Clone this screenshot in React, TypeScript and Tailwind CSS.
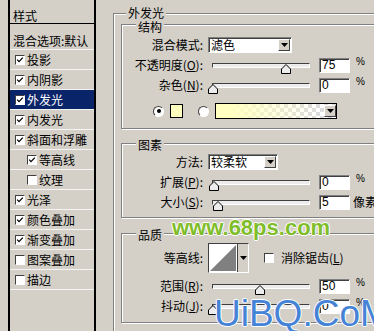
import type { ReactNode } from 'react'

const cjk = '[font-family:"Noto_Sans_CJK_SC","Liberation_Sans",sans-serif]'

function Tick() {
  return (
    <svg viewBox="0 0 10 10" className="h-[8px] w-[8px]">
      <path d="M1.5 4.5 L3.8 7 L8.5 2" fill="none" stroke="#000" strokeWidth="1.6" />
    </svg>
  )
}

function CheckBox({ checked }: { checked: boolean }) {
  return (
    <span className="flex h-[10px] w-[10px] shrink-0 items-center justify-center border border-t-[#404040] border-l-[#404040] border-r-white border-b-white bg-white">
      {checked && <Tick />}
    </span>
  )
}

function DropArrow() {
  return (
    <span className="flex h-[12px] w-[12px] shrink-0 items-center justify-center border border-t-white border-l-white border-r-[#404040] border-b-[#404040] bg-[#d4d0c8]">
      <svg viewBox="0 0 7 4" className="h-[4px] w-[7px]">
        <path d="M0 0 H7 L3.5 4 Z" fill="#000" />
      </svg>
    </span>
  )
}

function Select({ value, width }: { value: string; width: string }) {
  return (
    <div className={`ml-[5px] flex h-[16px] items-center justify-between border border-t-[#808080] border-l-[#808080] border-r-white border-b-white bg-white pl-[2px] pr-[1px] shadow-[inset_1px_1px_0_#404040] ${width}`}>
      <span className="leading-[14px]">{value}</span>
      <DropArrow />
    </div>
  )
}

function Slider({ value }: { value: number }) {
  return (
    <div className="relative ml-[9px] h-[5px] w-[98px] shrink-0 border border-t-[#404040] border-l-[#404040] border-r-white border-b-white bg-[#ececec]">
      <svg
        viewBox="0 0 10 10"
        className="absolute top-[0px] h-[10px] w-[10px]"
        style={{ left: `calc(${value}% - 5px)` }}
      >
        <path d="M5 0.5 L9.5 5 L9.5 9.5 L0.5 9.5 L0.5 5 Z" fill="#ececec" stroke="#000" />
      </svg>
    </div>
  )
}

function NumBox({ value, unit }: { value: string; unit: string }) {
  return (
    <>
      <div className="ml-[9px] flex h-[15px] w-[31px] shrink-0 items-center border border-t-[#808080] border-l-[#808080] border-r-white border-b-white bg-white pl-[2px] font-['Liberation_Sans',sans-serif] text-[12px] shadow-[inset_1px_1px_0_#404040]">
        {value}
      </div>
      {unit === '%' ? (
        <span className="-mt-[6px] ml-[6px] font-['Liberation_Sans',sans-serif] text-[10px] leading-[10px]">%</span>
      ) : (
        <span className="ml-[3px] whitespace-nowrap leading-[14px]">{unit}</span>
      )}
    </>
  )
}

function Label({ children }: { children: ReactNode }) {
  return <span className="w-[81px] shrink-0 whitespace-nowrap text-right leading-[14px]">{children}</span>
}

function SliderRow({ label, value, pos, unit = '%' }: { label: ReactNode; value: string; pos: number; unit?: string }) {
  return (
    <div className="flex h-[20px] items-center">
      <Label>{label}</Label>
      <Slider value={pos} />
      <NumBox value={value} unit={unit} />
    </div>
  )
}

function Group({ title, titleShift, className, children }: { title: string; titleShift: string; className: string; children: ReactNode }) {
  return (
    <div className={`ml-[7px] w-[262px] border border-[#808080] shadow-[inset_1px_1px_0_#fff,1px_1px_0_#fff] ${className}`}>
      <div className={`ml-[14px] w-fit bg-[#d4d0c8] px-[2px] leading-[14px] ${titleShift}`}>{title}</div>
      {children}
    </div>
  )
}

const styles = [
  { name: '投影', on: true },
  { name: '内阴影', on: true },
  { name: '外发光', on: true, active: true },
  { name: '内发光', on: true },
  { name: '斜面和浮雕', on: true },
  { name: '等高线', on: true, sub: true },
  { name: '纹理', on: false, sub: true },
  { name: '光泽', on: true },
  { name: '颜色叠加', on: true },
  { name: '渐变叠加', on: true },
  { name: '图案叠加', on: false },
  { name: '描边', on: false },
]

export default function App() {
  return (
    <div className={`relative flex h-[331px] w-[374px] overflow-hidden bg-[#d4d0c8] text-[12px] text-black ${cjk}`}>
      {/* style list */}
      <div className="ml-[8px] h-full w-[88px] shrink-0 border-x-2 border-black">
        <div className="h-[24px] border-b border-black pl-[3px] pt-[9px] leading-[14px]">样式</div>
        <div className="h-[26px] border-b border-[#f4f4f4] pl-[3px] pt-[10px] leading-[14px] whitespace-nowrap">混合选项:默认</div>
        {styles.map((s) => (
          <div key={s.name} className="h-[20px] border-b border-[#f4f4f4]">
            <div
              className={`flex h-[19px] items-center ${s.sub ? 'pl-[17px]' : 'pl-[5px]'} ${s.active ? 'bg-[#0a246a] text-white' : ''}`}
            >
              <CheckBox checked={s.on} />
              <span className="ml-[2px] leading-[14px] whitespace-nowrap">{s.name}</span>
            </div>
          </div>
        ))}
      </div>

      {/* outer glow panel */}
      <div className="ml-[17px] mt-[13px] h-[340px] w-[280px] shrink-0 border border-[#808080] shadow-[inset_1px_1px_0_#fff]">
        <div className="-mt-[8px] ml-[12px] w-fit bg-[#d4d0c8] px-[2px] leading-[14px]">外发光</div>

        <Group title="结构" titleShift="-mt-[5px]" className="mt-[4px]">
          <div className="mt-[1px] pb-[6px]">
            <div className="flex h-[20px] items-center">
              <Label>混合模式:</Label>
              <Select value="滤色" width="w-[84px]" />
            </div>
            <SliderRow label={<>不透明度(<u>O</u>):</>} value="75" pos={76} />
            <SliderRow label={<>杂色(<u>N</u>):</>} value="0" pos={0} />
            <div className="mt-[5px] flex h-[22px] items-center">
              <span className="ml-[31px] flex h-[11px] w-[11px] items-center justify-center rounded-full border border-t-[#404040] border-l-[#404040] border-r-white border-b-white bg-white">
                <span className="h-[4px] w-[4px] rounded-full bg-black" />
              </span>
              <span className="ml-[6px] h-[14px] w-[13px] border border-black bg-[#ffffc0]" />
              <span className="ml-[15px] h-[11px] w-[11px] rounded-full border border-t-[#404040] border-l-[#404040] border-r-white border-b-white bg-white" />
              <div className="ml-[6px] flex h-[16px] w-[122px] items-center justify-end border border-black bg-[linear-gradient(to_right,#ffffc0,#ffffc0_10%,rgba(255,255,192,0)_85%),conic-gradient(#dcdcdc_25%,#fff_0_50%,#dcdcdc_0_75%,#fff_0)] bg-[length:100%_100%,8px_8px]">
                <DropArrow />
              </div>
            </div>
          </div>
        </Group>

        <Group title="图素" titleShift="-mt-[6px]" className="mt-[14px]">
          <div className="pb-[5px]">
            <div className="flex h-[20px] items-center">
              <Label>方法:</Label>
              <Select value="较柔软" width="w-[70px]" />
            </div>
            <SliderRow label={<>扩展(<u>P</u>):</>} value="0" pos={1} />
            <SliderRow label={<>大小(<u>S</u>):</>} value="5" pos={5} unit="像素" />
          </div>
        </Group>

        <Group title="品质" titleShift="-mt-[6px]" className="mt-[15px]">
          <div className="mt-[1px] pb-[6px]">
            <div className="flex h-[30px] items-center">
              <Label>等高线:</Label>
              <div className="ml-[5px] flex h-[30px] w-[41px] shrink-0 border border-t-[#404040] border-l-[#404040] border-r-white border-b-white bg-white">
                <svg viewBox="0 0 28 28" className="h-[28px] w-[28px]">
                  <path d="M1 27 L27 1 L27 27 Z" fill="#808080" />
                </svg>
                <span className="flex flex-1 items-center justify-center border-l border-[#404040] bg-[#d4d0c8]">
                  <svg viewBox="0 0 7 4" className="h-[4px] w-[7px]">
                    <path d="M0 0 H7 L3.5 4 Z" fill="#000" />
                  </svg>
                </span>
              </div>
              <span className="ml-[15px]">
                <CheckBox checked={false} />
              </span>
              <span className="ml-[7px] whitespace-nowrap leading-[14px]">消除锯齿(<u>L</u>)</span>
            </div>
            <div className="mt-[3px]">
              <SliderRow label={<>范围(<u>R</u>):</>} value="50" pos={49} />
              <SliderRow label={<>抖动(<u>J</u>):</>} value="0" pos={0} />
            </div>
          </div>
        </Group>
      </div>

      {/* watermarks */}
      <span className="absolute left-[172px] top-[215px] font-['Liberation_Sans',sans-serif] text-[22px] font-bold leading-[26px] text-[#7fbd2a] [text-shadow:1px_0_0_#fff,-1px_0_0_#fff,0_1px_0_#fff,0_-1px_0_#fff]">
        www.68ps.com
      </span>
      <span className="absolute left-[214px] top-[294px] font-['Liberation_Sans',sans-serif] text-[37px] leading-[40px] text-[#4583d6] [text-shadow:1px_0_0_#fff,-1px_0_0_#fff,0_1px_0_#fff,0_-1px_0_#fff]">
        UiBQ.CoM
      </span>
    </div>
  )
}
